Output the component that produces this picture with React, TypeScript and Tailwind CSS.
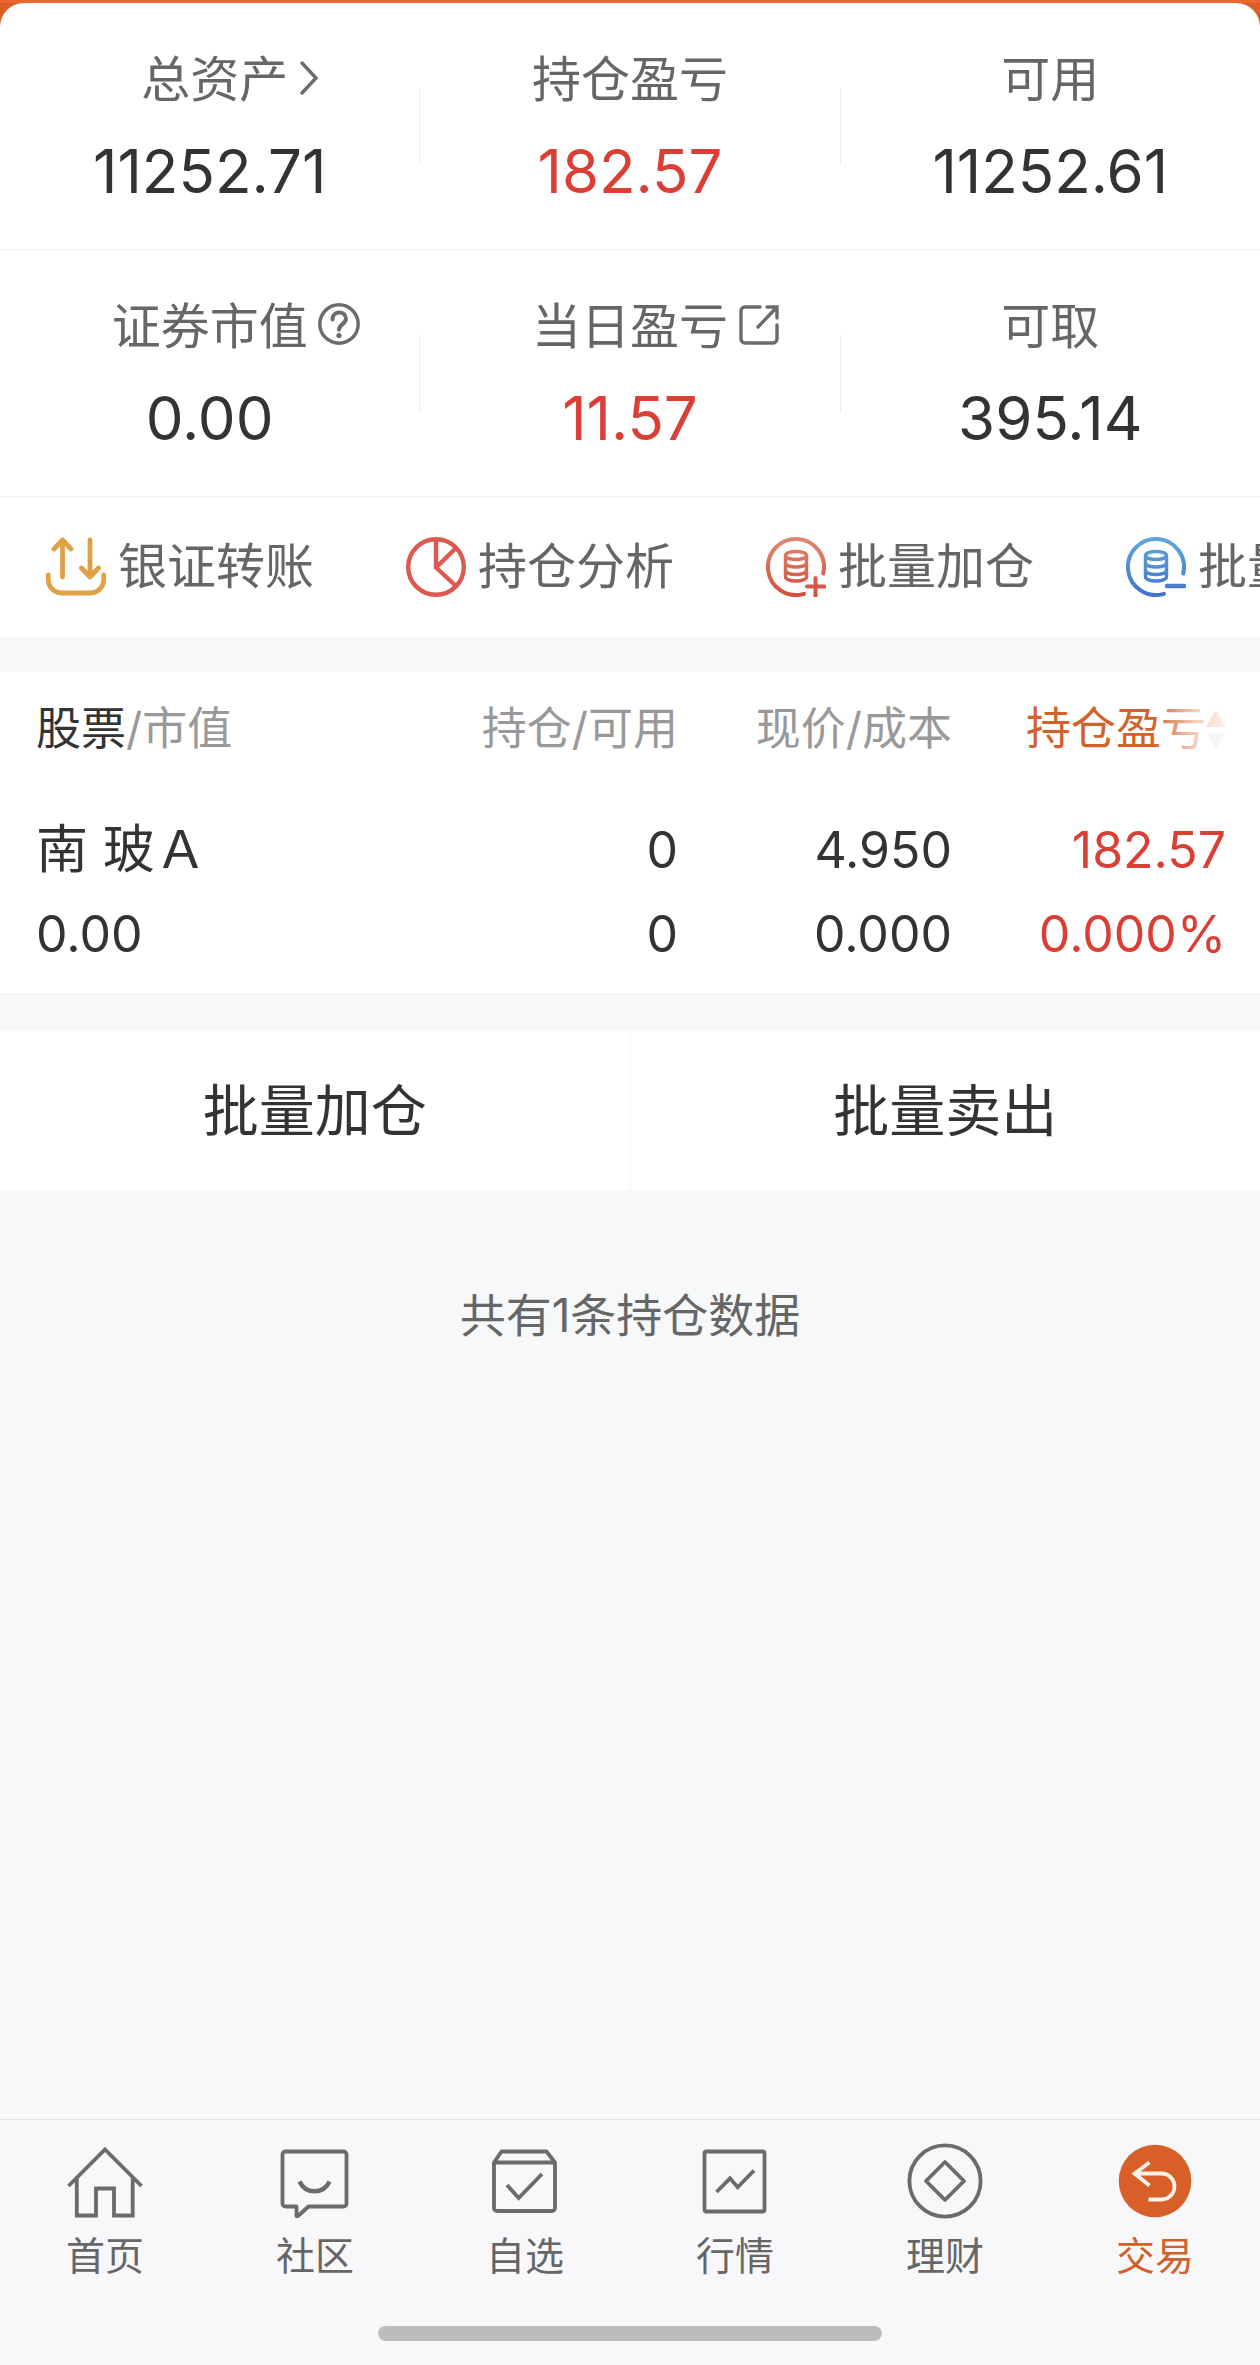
import type { ReactNode } from "react";

type Stat = {
  label: string;
  value: string;
  red?: boolean;
  icon?: "chevron" | "help" | "external";
};

const statRows: Stat[][] = [
  [
    { label: "总资产", value: "11252.71", icon: "chevron" },
    { label: "持仓盈亏", value: "182.57", red: true },
    { label: "可用", value: "11252.61" },
  ],
  [
    { label: "证券市值", value: "0.00", icon: "help" },
    { label: "当日盈亏", value: "11.57", red: true, icon: "external" },
    { label: "可取", value: "395.14" },
  ],
];

const holdings = [
  { name: "南 玻Ａ", marketValue: "0.00", position: "0", available: "0", price: "4.950", cost: "0.000", profit: "182.57", profitRate: "0.000%" },
];

function StatIcon({ name }: { name: Stat["icon"] }) {
  return (
    <svg viewBox="0 0 42 42" className="size-[42px]" fill="none" stroke="#6b6b6b" strokeWidth="3.4">
      {name === "chevron" && <path d="M4 7l14 15L4 37" strokeLinecap="round" />}
      {name === "help" && (
        <>
          <circle cx="21" cy="21" r="19.2" />
          <path d="M14.5 16.5c0-4.5 3-7 6.8-7s6.6 2.6 6.6 6.3c0 5-6.9 5.7-6.9 11" strokeWidth="4" strokeLinecap="round" />
          <circle cx="21" cy="32.5" r="2.6" fill="#6b6b6b" stroke="none" />
        </>
      )}
      {name === "external" && (
        <>
          <path d="M22 4H7a4 4 0 0 0-4 4v28a4 4 0 0 0 4 4h28a4 4 0 0 0 4-4V22" strokeLinecap="round" />
          <path d="M29 4h10v11M39 4L20 24" strokeLinecap="round" />
        </>
      )}
    </svg>
  );
}

function TransferIcon() {
  return (
    <svg viewBox="0 0 60 60" className="size-[60px]" fill="none" stroke="#e0a046" strokeWidth="4.8" strokeLinecap="round" strokeLinejoin="round">
      <path d="M16.5 40V3M8 12l8.500-9L25 12M44 3v37M35.500 31l8.500 9 8.500-9" />
      <path d="M2.300 38v4.500a13.500 13.500 0 0 0 13.500 13.500h28.400a13.500 13.500 0 0 0 13.500-13.500V38" />
    </svg>
  );
}

function PieIcon() {
  return (
    <svg viewBox="0 0 60 60" className="size-[60px]" fill="none" stroke="#dc5850" strokeWidth="4.4">
      <circle cx="30" cy="30" r="27.8" />
      <path d="M30 2v28.500l20.500 19M30 30.500l20-19.500" strokeLinejoin="round" />
    </svg>
  );
}

function CoinsIcon({ id, from, to, minus }: { id: string; from: string; to: string; minus?: boolean }) {
  return (
    <svg viewBox="0 0 60 60" className="size-[60px]" fill="none" stroke={`url(#${id})`} strokeWidth="4" strokeLinecap="round">
      <defs>
        <linearGradient id={id} x1="0" y1="0" x2="0" y2="60" gradientUnits="userSpaceOnUse">
          <stop offset="0" stopColor={from} />
          <stop offset="1" stopColor={to} />
        </linearGradient>
      </defs>
      <path d="M57.200 36.500A28 28 0 1 0 38 56.800" />
      <ellipse cx="30" cy="18.500" rx="10.500" ry="4" strokeWidth="3.4" />
      <path d="M19.500 18.500V40c0 2.200 4.700 4 10.500 4s10.500-1.800 10.500-4V18.500M19.500 26c0 2.200 4.700 4 10.500 4s10.500-1.800 10.500-4M19.500 33.500c0 2.200 4.700 4 10.500 4s10.500-1.800 10.500-4" strokeWidth="3.4" />
      {minus ? <path d="M41 49h17" strokeWidth="4.400" /> : <path d="M41 49.500h17.500M49.500 41v17.500" />}
    </svg>
  );
}

const shortcuts: { label: string; icon: ReactNode }[] = [
  { label: "银证转账", icon: <TransferIcon /> },
  { label: "持仓分析", icon: <PieIcon /> },
  { label: "批量加仓", icon: <CoinsIcon id="coins-add" from="#de8a74" to="#d64a3a" /> },
  { label: "批量卖出", icon: <CoinsIcon id="coins-sell" from="#62a8dc" to="#4272cc" minus /> },
];

const tabs: { label: string; active?: boolean; icon: ReactNode }[] = [
  {
    label: "首页",
    icon: <path d="M1.500 43L38 6.500 74.500 43M9.800 34.500v38H29v-27h18v27h18.700v-38" />,
  },
  {
    label: "社区",
    icon: (
      <>
        <path d="M8.500 8.500h58a3 3 0 0 1 3 3v49a3 3 0 0 1-3 3H31.500L21 73h-1.500v-9.500h-11a3 3 0 0 1-3-3v-49a3 3 0 0 1 3-3z" strokeLinejoin="round" />
        <path d="M22.500 38.500c6 13 24 13 30 0" strokeWidth="4.400" />
      </>
    ),
  },
  {
    label: "自选",
    icon: (
      <>
        <path d="M7 19.500L14.500 8.500h45L68 19.500V65a3 3 0 0 1-3 3H10a3 3 0 0 1-3-3zM7 19.500h61" strokeLinejoin="round" />
        <path d="M20 42l11.700 13L55 31" />
      </>
    ),
  },
  {
    label: "行情",
    icon: (
      <>
        <rect x="7.500" y="8.500" width="60" height="60" rx="2" />
        <path d="M19.500 49L33 35.300l7.700 9L57 27.500" />
      </>
    ),
  },
  {
    label: "理财",
    icon: (
      <>
        <circle cx="38" cy="38" r="35.6" />
        <path d="M38 19l19 19-19 19-19-19z" strokeLinejoin="round" />
      </>
    ),
  },
  {
    label: "交易",
    active: true,
    icon: (
      <>
        <circle cx="38" cy="38" r="36.3" fill="#d85f27" stroke="none" />
        <path d="M32.500 19.500l-15 11 15 12M17.500 30.500H44.500a13 13 0 0 1 0 26H31.500" stroke="#fff3ea" />
      </>
    ),
  },
];

function StatCell({ stat }: { stat: Stat }) {
  return (
    <div className="flex-1 text-center">
      <div className={`text-[49px] leading-[72px] text-[#666] ${stat.icon === "chevron" ? "pl-[10px]" : ""}`}>
        <span className="relative inline-block">
          {stat.label}
          {stat.icon && (
            <button type="button" aria-label={stat.label} className="absolute top-3 left-full ml-[10px]">
              <StatIcon name={stat.icon} />
            </button>
          )}
        </span>
      </div>
      <div className={`mt-[11px] text-[60px] leading-[88px] ${stat.red ? "text-[#d93f35]" : "text-[#333]"}`}>{stat.value}</div>
    </div>
  );
}

export default function App() {
  return (
    <div className="flex min-h-screen flex-col overflow-x-hidden bg-[#f6f8fa] font-['Inter','Noto_Sans_CJK_SC',sans-serif] text-[#333]">
      {/* 资产概览 */}
      <header className="border-t-[3px] border-[#ed6530] bg-[#d95f27]">
        <div className="rounded-t-[24px] bg-white">
          {statRows.map((row, i) => (
            <div key={i} className="flex items-start border-b border-[#eee] pt-[41px] pb-[34px]">
              {row.map((stat, j) => (
                <div key={stat.label} className="contents">
                  {j > 0 && <div className="mt-11 h-[77px] w-px bg-[#eee]" />}
                  <StatCell stat={stat} />
                </div>
              ))}
            </div>
          ))}
        </div>
      </header>

      {/* 快捷入口 */}
      <div className="flex overflow-hidden bg-white py-[34px]">
        {shortcuts.map((s) => (
          <button key={s.label} type="button" className="flex w-[360px] shrink-0 items-center gap-3 pl-[46px] text-[49px] leading-[72px] text-[#666]">
            {s.icon}
            <span className="whitespace-nowrap">{s.label}</span>
          </button>
        ))}
      </div>

      {/* 持仓列表 */}
      <div className="mt-[35px] border-b border-[#e9eceb] bg-white pt-6 pr-[34px] pb-[18px] pl-9">
        <table className="w-full table-fixed text-right text-[50px] leading-[84px]">
          <thead className="text-[45px] leading-[66px] text-[#999]">
            <tr>
              <th className="pb-[46px] text-left font-normal">
                <span className="text-[#333]">股票</span>/市值
              </th>
              <th className="w-[274px] pb-[46px] font-normal whitespace-nowrap">持仓/可用</th>
              <th className="w-[274px] pb-[46px] font-normal whitespace-nowrap">现价/成本</th>
              <th className="w-[274px] pb-[46px] font-normal">
                <button type="button" className="relative inline-flex items-center whitespace-nowrap text-[#d2622a]">
                  持仓盈亏
                  <svg viewBox="0 0 20 40" className="h-10 w-5">
                    <path d="M10 1l10 17H0z" fill="#f0642c" />
                    <path d="M10 40l10-16H0z" fill="#ccc" />
                  </svg>
                  <span className="absolute inset-y-0 right-0 w-[74px] bg-linear-to-r from-white/0 via-white/70 via-60% to-white/90" />
                </button>
              </th>
            </tr>
          </thead>
          <tbody>
            {holdings.map((h) => (
              <tr key={h.name}>
                <td className="text-left">
                  <div className="text-[52px]">{h.name}</div>
                  <div>{h.marketValue}</div>
                </td>
                <td>
                  <div>{h.position}</div>
                  <div>{h.available}</div>
                </td>
                <td>
                  <div>{h.price}</div>
                  <div>{h.cost}</div>
                </td>
                <td className="text-[#d93f35]">
                  <div>{h.profit}</div>
                  <div>{h.profitRate}</div>
                </td>
              </tr>
            ))}
          </tbody>
        </table>
      </div>

      {/* 批量操作 */}
      <div className="mt-[35px] flex divide-x divide-[#f5f5f5] bg-white text-[56px] leading-[80px]">
        <button type="button" className="flex-1 pt-[41px] pb-[39px]">批量加仓</button>
        <button type="button" className="flex-1 pt-[41px] pb-[39px]">批量卖出</button>
      </div>

      <p className="mt-[92px] text-center text-[46px] leading-[66px] text-[#666]">共有{holdings.length}条持仓数据</p>

      {/* 底部导航 */}
      <nav className="mt-auto border-t border-[#e2e4e6] bg-[#f8f8fa] pt-[23px] pb-6">
        <div className="grid grid-cols-6">
          {tabs.map((t) => (
            <a key={t.label} href="#" className={`flex flex-col items-center gap-[9px] text-[39px] leading-[56px] ${t.active ? "text-[#d2602a]" : "text-[#666]"}`}>
              <svg viewBox="0 0 76 76" className="size-[76px]" fill="none" stroke="#6b6b6b" strokeWidth="3.8">
                {t.icon}
              </svg>
              {t.label}
            </a>
          ))}
        </div>
        <div className="mx-auto mt-[42px] h-[15px] w-2/5 rounded-full bg-[#bcbcbc]" />
      </nav>
    </div>
  );
}
